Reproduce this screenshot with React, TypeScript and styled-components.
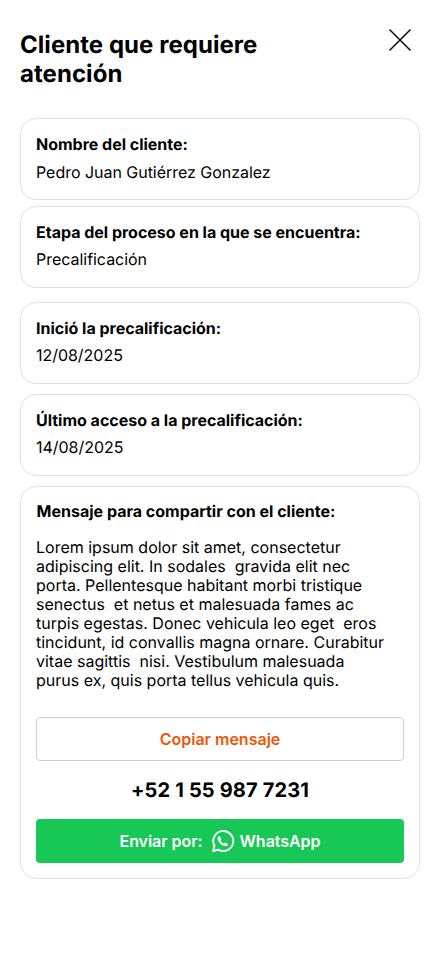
import React from 'react';
import styled, { createGlobalStyle } from 'styled-components';

const GlobalStyle = createGlobalStyle`
  *, *::before, *::after { box-sizing: border-box; }
  body {
    margin: 0;
    background: #fff;
    color: #000;
    font-family: Inter, sans-serif;
    text-rendering: geometricPrecision;
  }
`;

const Screen = styled.main`
  width: 440px;
  min-height: 956px;
  padding: 30px 20px 0;
  background: #fff;
`;

const Header = styled.header`
  display: flex;
  justify-content: space-between;
  align-items: flex-start;
  height: 88px;
`;

const Title = styled.h1`
  margin: 0;
  width: 260px;
  font-size: 24px;
  line-height: 29px;
  font-weight: 700;
  letter-spacing: 0.05px;
`;

const CloseButton = styled.button`
  display: flex;
  margin: -2px 8px 0 0;
  padding: 0;
  border: 0;
  background: none;
`;

const Card = styled.section<{ $gap: number; $spacing: number }>`
  height: 82px;
  margin-bottom: ${({ $gap }) => $gap}px;
  padding: 15px;
  border: 1px solid #e2e2e2;
  border-radius: 16px;

  p { margin-top: ${({ $spacing }) => $spacing}px; }
`;

const Label = styled.h2`
  margin: 0;
  font-size: 16px;
  line-height: 20px;
  font-weight: 700;
  letter-spacing: -0.01px;
  white-space: nowrap;
`;

const Value = styled.p`
  margin: 0;
  font-size: 16px;
  line-height: 20px;
  letter-spacing: -0.03px;
`;

const MessageCard = styled.section`
  display: flex;
  flex-direction: column;
  height: 393px;
  padding: 14px 15px 15px;
  border: 1px solid #e2e2e2;
  border-radius: 16px;
`;

const MessageLabel = styled(Label)`
  padding-left: 0.6px;
  letter-spacing: 0;
`;

const Message = styled.p`
  margin: 17px 0 0;
  font-size: 16px;
  line-height: 19px;
  white-space: pre;
`;

const CopyButton = styled.button`
  height: 44px;
  margin-top: 27px;
  padding: 0 0 1px;
  border: 1px solid #d0d0d0;
  border-radius: 4px;
  background: #fff;
  color: #ea580c;
  font: 600 16px/20px Inter, sans-serif;
`;

const Phone = styled.p`
  margin: 17px 0;
  text-align: center;
  font-size: 20px;
  line-height: 24px;
  font-weight: 700;
  letter-spacing: 0.16px;
`;

const SendButton = styled.button`
  display: flex;
  align-items: center;
  justify-content: center;
  height: 44px;
  padding: 0;
  border: 0;
  border-radius: 4px;
  background: #17c857;
  color: #fff;
  font: 600 16px/20px Inter, sans-serif;
  letter-spacing: -0.04px;

  svg { margin: 0 5px 0 8px; }
`;

const details = [
  { label: 'Nombre del cliente:', value: 'Pedro Juan Gutiérrez Gonzalez', gap: 6, spacing: 8 },
  { label: 'Etapa del proceso en la que se encuentra:', value: 'Precalificación', gap: 14, spacing: 7 },
  { label: 'Inició la precalificación:', value: '12/08/2025', gap: 10, spacing: 7 },
  { label: 'Último acceso a la precalificación:', value: '14/08/2025', gap: 10, spacing: 7 },
];

const message = [
  'Lorem ipsum dolor sit amet, consectetur',
  'adipiscing elit. In sodales  gravida elit nec',
  'porta. Pellentesque habitant morbi tristique',
  'senectus  et netus et malesuada fames ac',
  'turpis egestas. Donec vehicula leo eget  eros',
  'tincidunt, id convallis magna ornare. Curabitur',
  'vitae sagittis  nisi. Vestibulum malesuada',
  'purus ex, quis porta tellus vehicula quis.',
].join('\n');

const WhatsAppIcon = () => (
  <svg width="24" height="24" viewBox="0 0 24 24" fill="none" aria-hidden="true">
    <path
      d="M2 22l1.5-5.2A10 10 0 1 1 7.2 20.6Z"
      stroke="#fff"
      strokeWidth="1.9"
      strokeLinejoin="round"
    />
    <path
      d="M7.2 7.6C7.7 7 8.5 6.9 8.9 7.5L10.2 9.5C10.4 9.9 10.3 10.3 10 10.6L9.3 11.3C10.1 12.9 11.3 14 12.9 14.7L13.6 13.9C13.9 13.6 14.3 13.5 14.7 13.7L16.7 14.9C17.2 15.3 17.2 16 16.7 16.5C15.9 17.3 14.7 17.5 13.5 17.1C10.5 16.2 8.1 13.9 6.9 10.9C6.4 9.7 6.4 8.5 7.2 7.6Z"
      fill="#fff"
    />
  </svg>
);

export default function App() {
  return (
    <>
      <GlobalStyle />
      <Screen>
        <Header>
          <Title>Cliente que requiere atención</Title>
          <CloseButton aria-label="Cerrar">
            <svg width="24" height="24" viewBox="0 0 24 24" fill="none" stroke="#000" strokeWidth="1.5" strokeLinecap="round">
              <path d="M2 2l20 20M22 2L2 22" />
            </svg>
          </CloseButton>
        </Header>
        {details.map(({ label, value, gap, spacing }) => (
          <Card key={label} $gap={gap} $spacing={spacing}>
            <Label>{label}</Label>
            <Value>{value}</Value>
          </Card>
        ))}
        <MessageCard>
          <MessageLabel>Mensaje para compartir con el cliente:</MessageLabel>
          <Message>{message}</Message>
          <CopyButton>Copiar mensaje</CopyButton>
          <Phone>+52 1 55 987 7231</Phone>
          <SendButton>
            Enviar por:
            <WhatsAppIcon />
            WhatsApp
          </SendButton>
        </MessageCard>
      </Screen>
    </>
  );
}
